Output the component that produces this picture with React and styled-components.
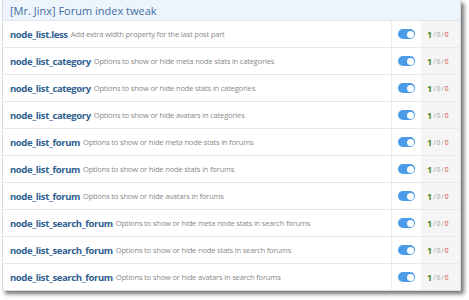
import React from "react";
import styled, { createGlobalStyle } from "styled-components";

const GlobalStyle = createGlobalStyle`
  body {
    margin: 0;
    background: #ffffff;
    font-family: "Open Sans", "Noto Sans", sans-serif;
  }
`;

const Page = styled.div`
  padding: 0 0 0 2px;
  width: 469px;
  height: 300px;
  box-sizing: border-box;
`;

const Card = styled.div`
  width: 457px;
  border: 1px solid #d6dde6;
  border-top: none;
  background: #fff;
  box-shadow: 3px 3px 4px rgba(0, 0, 0, 0.55);
`;

const Header = styled.div`
  height: 20px;
  display: flex;
  align-items: center;
  padding-left: 7px;
  background: #edf4fc;
  color: #3f6fa3;
  font-size: 11px;
  border-bottom: 1px solid #e0e6ee;
`;

const Row = styled.div`
  display: grid;
  grid-template-columns: 1fr 30px 39px;
  height: 26px;
  border-bottom: ${(p) => (p.$last ? "none" : "1px solid #e6e9ed")};
`;

const Main = styled.div`
  display: flex;
  align-items: center;
  padding-left: 7px;
  white-space: nowrap;
  overflow: hidden;
`;

const Title = styled.span`
  color: #2f5e8f;
  font-weight: 700;
  font-size: 9.5px;
  letter-spacing: -0.38px;
`;

const Desc = styled.span`
  color: #8a8a8a;
  font-size: 7.6px;
  letter-spacing: -0.2px;
  margin-left: 3px;
`;

const ToggleCell = styled.div`
  display: flex;
  align-items: center;
  justify-content: center;
  border-left: 1px solid #eceff2;
`;

const Toggle = styled.span`
  position: relative;
  width: 17px;
  height: 10px;
  border-radius: 5px;
  background: #4a9be8;
  &::after {
    content: "";
    position: absolute;
    right: 1.5px;
    top: 1.5px;
    width: 7px;
    height: 7px;
    border-radius: 50%;
    background: #fff;
  }
`;

const Stats = styled.div`
  display: flex;
  align-items: center;
  padding-left: 6px;
  background: #f5f5f5;
  font-size: 6.5px;
  color: #a0a0a0;
`;

const Ok = styled.span`
  color: #4a8a22;
  font-weight: 700;
  font-size: 9px;
`;

const Sep = styled.span`
  margin: 0 1px;
`;

const Bad = styled.span`
  color: #d04040;
`;

const items = [
  ["node_list.less", "Add extra width property for the last post part"],
  ["node_list_category", "Options to show or hide meta node stats in categories"],
  ["node_list_category", "Options to show or hide node stats in categories"],
  ["node_list_category", "Options to show or hide avatars in categories"],
  ["node_list_forum", "Options to show or hide meta node stats in forums"],
  ["node_list_forum", "Options to show or hide node stats in forums"],
  ["node_list_forum", "Options to show or hide avatars in forums"],
  ["node_list_search_forum", "Options to show or hide meta node stats in search forums"],
  ["node_list_search_forum", "Options to show or hide node stats in search forums"],
  ["node_list_search_forum", "Options to show or hide avatars in search forums"],
];

const App = () => (
  <Page>
    <GlobalStyle />
    <Card>
      <Header>[Mr. Jinx] Forum index tweak</Header>
      {items.map(([title, desc], i) => (
        <Row key={i} $last={i === items.length - 1}>
          <Main>
            <Title>{title}</Title>
            <Desc>{desc}</Desc>
          </Main>
          <ToggleCell>
            <Toggle />
          </ToggleCell>
          <Stats>
            <Ok>1</Ok>
            <Sep>/</Sep>0<Sep>/</Sep>
            <Bad>0</Bad>
          </Stats>
        </Row>
      ))}
    </Card>
  </Page>
);

export default App;
